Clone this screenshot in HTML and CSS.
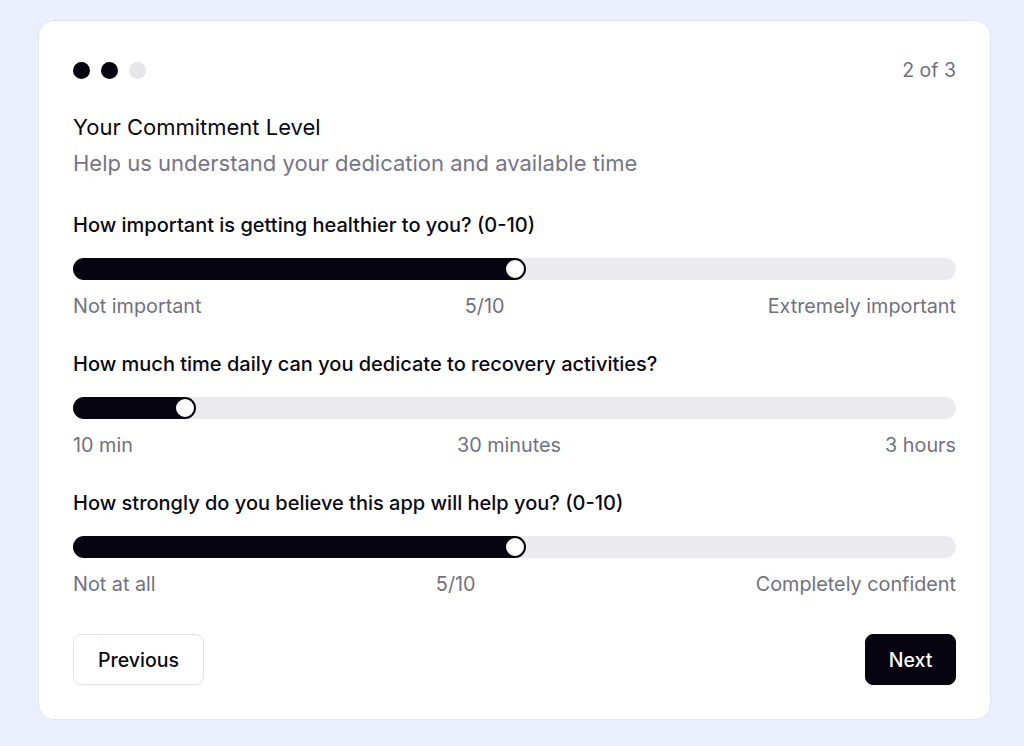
FILE: index.html
```html
<!DOCTYPE html>
<html lang="en">
<head>
<meta charset="utf-8">
<title>Your Commitment Level</title>
<link rel="stylesheet" href="styles.css">
</head>
<body>
<div class="card">
  <div class="header">
    <div class="dots">
      <span class="dot on"></span>
      <span class="dot on"></span>
      <span class="dot"></span>
    </div>
    <div class="step">2 of 3</div>
  </div>
  <h1 class="title">Your Commitment Level</h1>
  <p class="subtitle">Help us understand your dedication and available time</p>

  <div class="question">
    <div class="q-label">How important is getting healthier to you? (0-10)</div>
    <div class="track">
      <div class="fill" style="width: calc(11px + 0.5 * (100% - 22px));"></div>
      <div class="thumb" style="left: calc(0.5 * (100% - 22px));"></div>
    </div>
    <div class="scale"><span>Not important</span><span>5/10</span><span>Extremely important</span></div>
  </div>

  <div class="question">
    <div class="q-label">How much time daily can you dedicate to recovery activities?</div>
    <div class="track">
      <div class="fill" style="width: calc(11px + 0.1176 * (100% - 22px));"></div>
      <div class="thumb" style="left: calc(0.1176 * (100% - 22px));"></div>
    </div>
    <div class="scale"><span>10 min</span><span>30 minutes</span><span>3 hours</span></div>
  </div>

  <div class="question">
    <div class="q-label">How strongly do you believe this app will help you? (0-10)</div>
    <div class="track">
      <div class="fill" style="width: calc(11px + 0.5 * (100% - 22px));"></div>
      <div class="thumb" style="left: calc(0.5 * (100% - 22px));"></div>
    </div>
    <div class="scale"><span>Not at all</span><span>5/10</span><span>Completely confident</span></div>
  </div>

  <div class="actions">
    <button class="btn btn-outline">Previous</button>
    <button class="btn btn-dark">Next</button>
  </div>
</div>
</body>
</html>
```
FILE: styles.css
```css
* { box-sizing: border-box; }
html, body { margin: 0; padding: 0; }
body {
  background: #ebeffc;
  font-family: Inter, "Noto Sans", "Liberation Sans", sans-serif;
  color: #0a0a14;
  padding: 20px 0 0 38px;
  height: 746px;
}
.card {
  width: 953px;
  background: #ffffff;
  border: 1px solid #e3e5ee;
  border-radius: 16px;
  padding: 39px 34px 34px;
}
.header {
  display: flex;
  justify-content: space-between;
  align-items: center;
  height: 20px;
}
.dots { display: flex; gap: 11px; }
.dot {
  width: 17px; height: 17px; border-radius: 50%;
  background: #e5e6ea;
}
.dot.on { background: #05040f; }
.step {
  font-size: 19.5px;
  color: #6f6f80;
}
.title {
  margin: 33px 0 0;
  font-size: 22px;
  line-height: 28px;
  font-weight: 400;
  color: #0a0a14;
}
.subtitle {
  margin: 8px 0 0;
  font-size: 22px;
  line-height: 28px;
  color: #767588;
}
.question { margin-top: 35px; }
.question + .question { margin-top: 32px; }
.q-label {
  font-size: 20px;
  line-height: 26px;
  font-weight: 500;
  color: #0a0a14;
}
.track {
  position: relative;
  margin-top: 20px;
  height: 22px;
  border-radius: 11px;
  background: #ebeaef;
}
.fill {
  height: 100%;
  border-radius: 11px 0 0 11px;
  background: #05040f;
}
.thumb {
  position: absolute;
  top: 0;
  width: 22px; height: 22px;
  border-radius: 50%;
  background: #ffffff;
  border: 2px solid #05040f;
}
.scale {
  margin-top: 13px;
  display: flex;
  justify-content: space-between;
  font-size: 19.8px;
  line-height: 26px;
  color: #71717f;
}
.actions {
  margin-top: 37px;
  display: flex;
  justify-content: space-between;
}
.btn {
  height: 51px;
  border-radius: 8px;
  font-family: inherit;
  font-size: 19.5px;
  font-weight: 500;
  cursor: pointer;
}
.btn-outline {
  width: 131px;
  background: #ffffff;
  border: 1px solid #e2e2e8;
  color: #0a0a14;
}
.btn-dark {
  width: 91px;
  background: #05040f;
  border: 1px solid #05040f;
  color: #ffffff;
}
```
